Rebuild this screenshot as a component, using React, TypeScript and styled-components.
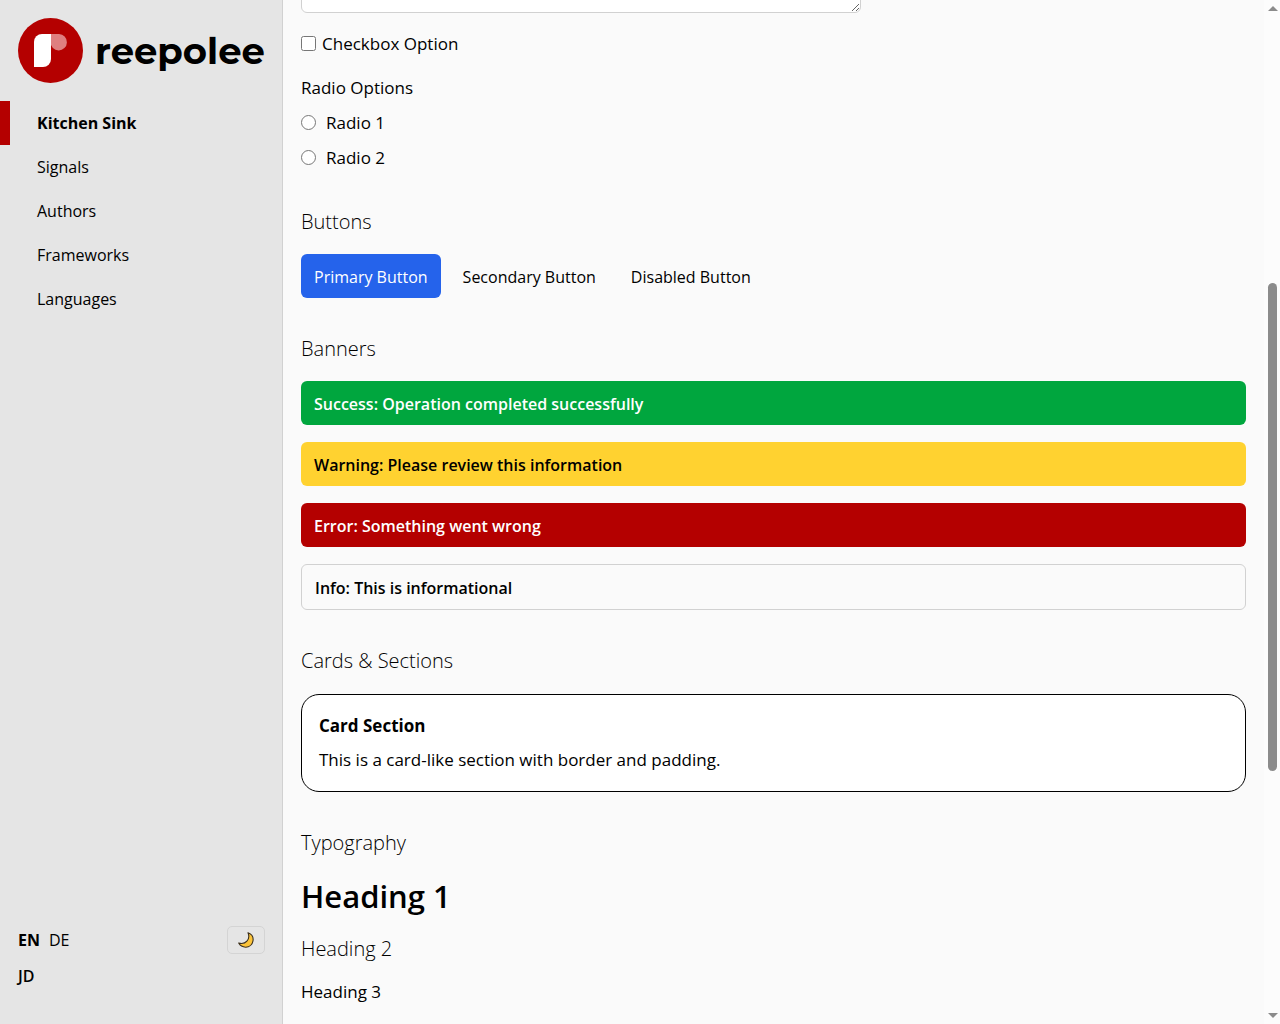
import React, { useState } from "react";
import styled, { createGlobalStyle } from "styled-components";

const GlobalStyle = createGlobalStyle`
  *, *::before, *::after { box-sizing: border-box; }
  body {
    margin: 0;
    background: #fafafa;
    color: #000;
    font-family: "Segoe UI", "Open Sans", "Noto Sans", sans-serif;
    font-size: 16px;
    line-height: 26px;
  }
  h1, h2, h3, p, fieldset, legend, ul { margin: 0; padding: 0; }
  button, textarea { font: inherit; color: inherit; }
`;

const Shell = styled.div`
  display: flex;
  height: 100vh;
  overflow: hidden;
`;

const Sidebar = styled.aside`
  flex: 0 0 283px;
  min-width: 0;
  display: flex;
  flex-direction: column;
  background: #e5e5e5;
  border-right: 1px solid #d1d1d1;
`;

const Brand = styled.a`
  display: flex;
  align-items: center;
  gap: 12px;
  padding: 18px 16px 18px 18px;
  color: #000;
  text-decoration: none;

  svg { flex: none; }
`;

const Wordmark = styled.span`
  font-family: Montserrat, Inter, sans-serif;
  font-size: 37px;
  font-weight: 700;
  line-height: 48px;
`;

const Nav = styled.nav`
  display: flex;
  flex-direction: column;
  flex: 1;
`;

const NavLink = styled.a<{ $active?: boolean }>`
  padding: 9px 18px 9px 27px;
  border-left: 10px solid ${(p) => (p.$active ? "#b40000" : "transparent")};
  font-weight: ${(p) => (p.$active ? 700 : 400)};
  color: #000;
  text-decoration: none;
`;

const SidebarFooter = styled.footer`
  display: flex;
  flex-direction: column;
  gap: 9px;
  padding: 0 17px 35px 18px;
`;

const FooterRow = styled.div`
  display: flex;
  align-items: center;
  justify-content: space-between;
`;

const Languages = styled.div`
  display: flex;
  gap: 9px;
`;

const LanguageLink = styled.a<{ $active?: boolean }>`
  font-weight: ${(p) => (p.$active ? 700 : 400)};
  color: #000;
  text-decoration: none;
`;

const UserLink = styled.a`
  font-weight: 600;
  color: #000;
  text-decoration: none;
`;

const ThemeButton = styled.button`
  display: flex;
  align-items: center;
  justify-content: center;
  width: 38px;
  height: 28px;
  padding: 0;
  background: transparent;
  border: 1px solid #d4d4d4;
  border-radius: 5px;
`;

const Main = styled.main`
  flex: 1;
  min-width: 0;
  display: flex;
  flex-direction: column;
  gap: 35px;
  padding: 0 18px;
  overflow: hidden;

  > * { flex: none; }
`;

const Form = styled.form`
  display: flex;
  flex-direction: column;
  align-items: flex-start;
  gap: 18px;
  font-size: 17px;
`;

const TextArea = styled.textarea`
  display: block;
  width: 560px;
  max-width: 100%;
  height: 88px;
  margin-top: -75px;
  background: #fff;
  border: 1px solid #d1d1d1;
  border-radius: 6px;
`;

const Choice = styled.label<{ $gap: number }>`
  display: flex;
  align-items: center;
  gap: ${(p) => p.$gap}px;

  input {
    width: 15px;
    height: 15px;
    margin: 0 0 2px;
  }
`;

const RadioGroup = styled.fieldset`
  display: flex;
  flex-direction: column;
  gap: 9px;
  border: 0;

  legend { margin-bottom: 9px; }
`;

const Section = styled.section<{ $gap?: number }>`
  display: flex;
  flex-direction: column;
  gap: ${(p) => p.$gap ?? 16}px;
`;

const Title = styled.h2`
  font-size: 20px;
  font-weight: 300;
  line-height: 32px;
`;

const ButtonRow = styled.div`
  display: flex;
  gap: 9px;
`;

const Button = styled.button<{ $primary?: boolean }>`
  padding: 10px 13px 8px;
  border: 0;
  border-radius: 6px;
  background: ${(p) => (p.$primary ? "#2563eb" : "transparent")};
  color: ${(p) => (p.$primary ? "#fff" : "#000")};
`;

const BannerList = styled.div`
  display: flex;
  flex-direction: column;
  gap: 17px;
`;

const tones = {
  success: "background: #00a63e; color: #fff;",
  warning: "background: #ffd230; color: #000;",
  error: "background: #b40000; color: #fff;",
  info: "background: #fafafa; color: #000; border: 1px solid #d1d1d1;",
};

const Banner = styled.div<{ $tone: keyof typeof tones }>`
  padding: 10px 13px 8px;
  border-radius: 6px;
  font-weight: 600;
  ${(p) => tones[p.$tone]}
`;

const Card = styled.article`
  display: flex;
  flex-direction: column;
  gap: 8px;
  padding: 18px 17px;
  background: #fff;
  border: 1px solid #000;
  border-radius: 18px;
  font-size: 17px;
`;

const CardTitle = styled.h3`
  font-size: 17px;
  font-weight: 700;
`;

const HeadingOne = styled.h1`
  font-size: 31px;
  font-weight: 600;
  line-height: 46px;
`;

const HeadingThree = styled.h3`
  font-size: 17px;
  font-weight: 400;
`;

const Scrollbar = styled.div`
  flex: 0 0 16px;
  display: flex;
  flex-direction: column;
  align-items: center;
  padding: 6px 0 6px 1px;
  background: #fcfcfc;
`;

const Arrow = styled.span<{ $down?: boolean }>`
  border: 0 solid transparent;
  border-left-width: 5px;
  border-right-width: 5px;
  ${(p) => (p.$down ? "border-top: 5px solid #8b8b8b;" : "border-bottom: 5px solid #8b8b8b;")}
`;

const Track = styled.div`
  flex: 1;
  display: flex;
  flex-direction: column;
  width: 9px;

  &::before { content: ""; flex: 272; }
  &::after { content: ""; flex: 242; }
`;

const Thumb = styled.div`
  flex: 488;
  border-radius: 5px;
  background: #8b8b8b;
`;

const LogoMark = () => (
  <svg width="65" height="65" viewBox="0 0 65 65" aria-hidden="true">
    <circle cx="32.500" cy="32.500" r="32.500" fill="#b40000" />
    <path d="M32.500 16H41a8.200 8.200 0 1 1-8.500 8.200z" fill="#df7f80" />
    <path d="M24 16h9v25a8 8 0 0 1-8 8h-9V24a8 8 0 0 1 8-8z" fill="#fff" />
  </svg>
);

const Moon = () => (
  <svg width="16" height="16" viewBox="0 0 16 16" aria-hidden="true">
    <path
      d="M10 .8c3.400 1.200 5.600 4.400 5 8.100-.6 3.700-3.700 6.300-7.300 6.300-3.100 0-5.600-1.500-7-4.100 3.300.9 6.300.3 8.200-1.900C10.900 7 11.300 3.900 10 .8z"
      fill="#fcc43a"
      stroke="#3b2f1c"
      strokeWidth="1.100"
      strokeLinejoin="round"
    />
  </svg>
);

const pages = ["Kitchen Sink", "Signals", "Authors", "Frameworks", "Languages"];

export default function App() {
  const [radio, setRadio] = useState("");

  return (
    <>
      <GlobalStyle />
      <Shell>
        <Sidebar>
          <Brand href="#">
            <LogoMark />
            <Wordmark>reepolee</Wordmark>
          </Brand>
          <Nav>
            {pages.map((page, i) => (
              <NavLink key={page} href="#" $active={i === 0}>
                {page}
              </NavLink>
            ))}
          </Nav>
          <SidebarFooter>
            <FooterRow>
              <Languages>
                <LanguageLink href="#" $active>EN</LanguageLink>
                <LanguageLink href="#">DE</LanguageLink>
              </Languages>
              <ThemeButton type="button" aria-label="Toggle theme">
                <Moon />
              </ThemeButton>
            </FooterRow>
            <UserLink href="#">JD</UserLink>
          </SidebarFooter>
        </Sidebar>

        <Main>
          <Form>
            <TextArea aria-label="Textarea" />
            <Choice $gap={6}>
              <input type="checkbox" />
              Checkbox Option
            </Choice>
            <RadioGroup>
              <legend>Radio Options</legend>
              {["Radio 1", "Radio 2"].map((name) => (
                <Choice key={name} $gap={10}>
                  <input
                    type="radio"
                    name="radio"
                    checked={radio === name}
                    onChange={() => setRadio(name)}
                  />
                  {name}
                </Choice>
              ))}
            </RadioGroup>
          </Form>

          <Section>
            <Title>Buttons</Title>
            <ButtonRow>
              <Button type="button" $primary>Primary Button</Button>
              <Button type="button">Secondary Button</Button>
              <Button type="button" disabled>Disabled Button</Button>
            </ButtonRow>
          </Section>

          <Section>
            <Title>Banners</Title>
            <BannerList>
              <Banner $tone="success">Success: Operation completed successfully</Banner>
              <Banner $tone="warning">Warning: Please review this information</Banner>
              <Banner $tone="error">Error: Something went wrong</Banner>
              <Banner $tone="info">Info: This is informational</Banner>
            </BannerList>
          </Section>

          <Section $gap={17}>
            <Title>Cards &amp; Sections</Title>
            <Card>
              <CardTitle>Card Section</CardTitle>
              <p>This is a card-like section with border and padding.</p>
            </Card>
          </Section>

          <Section $gap={14}>
            <Title>Typography</Title>
            <HeadingOne>Heading 1</HeadingOne>
            <Title>Heading 2</Title>
            <HeadingThree>Heading 3</HeadingThree>
          </Section>
        </Main>

        <Scrollbar aria-hidden="true">
          <Arrow />
          <Track>
            <Thumb />
          </Track>
          <Arrow $down />
        </Scrollbar>
      </Shell>
    </>
  );
}
